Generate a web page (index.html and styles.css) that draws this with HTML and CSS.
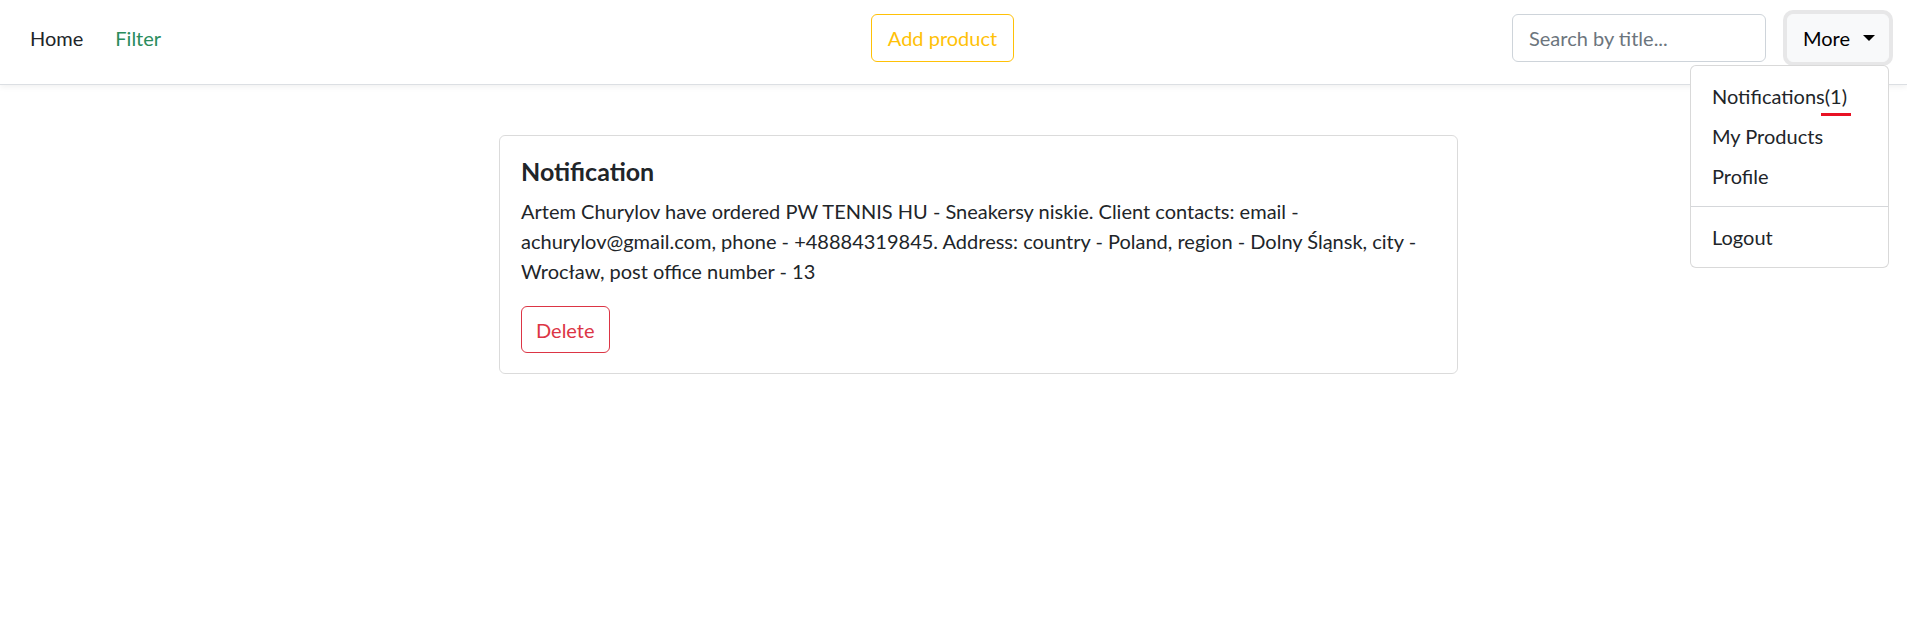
FILE: index.html
```html
<!DOCTYPE html>
<html lang="en">
<head>
<meta charset="utf-8">
<title>Notifications</title>
<link rel="stylesheet" href="styles.css">
</head>
<body>
<header class="navbar">
  <nav class="nav-left">
    <a class="nav-link" href="#">Home</a>
    <a class="nav-link nav-link-green" href="#">Filter</a>
  </nav>
  <div class="nav-center">
    <button class="btn btn-warning-outline" type="button">Add product</button>
  </div>
  <div class="nav-right">
    <input class="search" type="text" placeholder="Search by title...">
    <div class="dropdown">
      <button class="btn btn-light" type="button">More<span class="caret"></span></button>
      <ul class="dropdown-menu">
        <li><a class="dropdown-item" href="#">Notifications<span class="count">(1)</span></a></li>
        <li><a class="dropdown-item" href="#">My Products</a></li>
        <li><a class="dropdown-item" href="#">Profile</a></li>
        <li class="dropdown-divider"></li>
        <li><a class="dropdown-item" href="#">Logout</a></li>
      </ul>
    </div>
  </div>
</header>
<main class="content">
  <section class="card">
    <h5 class="card-title">Notification</h5>
    <p class="card-text">Artem Churylov have ordered PW TENNIS HU - Sneakersy niskie. Client contacts: email - achurylov@gmail.com, phone - +48884319845. Address: country - Poland, region - Dolny Śląnsk, city - Wrocław, post office number - 13</p>
    <button class="btn btn-danger-outline" type="button">Delete</button>
  </section>
</main>
</body>
</html>
```
FILE: styles.css
```css
* { box-sizing: border-box; }
html, body { margin: 0; padding: 0; background: #fff; }
body {
  font-family: Lato, "Noto Sans", sans-serif;
  font-size: 20px;
  line-height: 30px;
  color: #212529;
}
a { text-decoration: none; }

.navbar {
  display: grid;
  grid-template-columns: 1fr auto 1fr;
  align-items: start;
  height: 85px;
  padding: 14px 18px 0 14px;
  border-bottom: 1px solid #dcdfe3;
  box-shadow: 0 2px 6px rgba(0, 0, 0, 0.06);
  position: relative;
  z-index: 2;
}
.nav-left {
  display: flex;
  gap: 32px;
  padding: 9px 0 0 16px;
}
.nav-link { color: #212529; }
.nav-link-green { color: #2a8c5c; }

.nav-center { margin-right: 18px; }

.btn {
  font-family: inherit;
  font-size: 20px;
  line-height: 30px;
  border-radius: 6px;
  cursor: pointer;
  background: transparent;
}
.btn-warning-outline {
  height: 48px;
  padding: 8px 16px;
  color: #ffc107;
  border: 1px solid #ffc107;
}

.nav-right {
  display: flex;
  justify-content: flex-end;
  align-items: flex-start;
  gap: 21px;
}
.search {
  width: 254px;
  height: 48px;
  padding: 8px 16px;
  font-family: inherit;
  font-size: 20px;
  color: #212529;
  border: 1px solid #ced4da;
  border-radius: 6px;
  outline: none;
}
.search::placeholder { color: #6c757d; }

.dropdown { position: relative; }
.btn-light {
  display: flex;
  align-items: center;
  width: 102px;
  height: 48px;
  padding: 8px 15px;
  color: #000;
  background: #f8f9fa;
  border: 1px solid #f8f9fa;
  box-shadow: 0 0 0 4px #e7e7e8;
}
.caret {
  display: inline-block;
  margin-left: 13px;
  border-top: 6px solid #000;
  border-left: 6px solid transparent;
  border-right: 6px solid transparent;
}

.dropdown-menu {
  position: absolute;
  top: 51px;
  right: 0;
  width: 199px;
  margin: 0;
  padding: 10px 0;
  list-style: none;
  background: #fff;
  border: 1px solid rgba(0, 0, 0, 0.15);
  border-radius: 6px;
}
.dropdown-item {
  display: block;
  padding: 5px 21px;
  color: #212529;
}
.count { position: relative; }
.count::after {
  content: "";
  position: absolute;
  left: -4px;
  right: -4px;
  bottom: -8px;
  height: 3px;
  background: #e81224;
}
.dropdown-divider {
  height: 0;
  margin: 10px 0;
  border-top: 1px solid #d5d7da;
}

.content {
  padding: 50px 0 0 499px;
}
.card {
  width: 959px;
  padding: 20px 20px 20px 21px;
  border: 1px solid rgba(0, 0, 0, 0.14);
  border-radius: 6px;
}
.card-title {
  margin: 0 0 10px;
  font-size: 25px;
  line-height: 30px;
  font-weight: 700;
  color: #212529;
}
.card-text { margin: 0 0 20px; }
.btn-danger-outline {
  display: block;
  height: 47px;
  padding: 7px 14px;
  color: #dc3545;
  border: 1px solid #dc3545;
}
```
